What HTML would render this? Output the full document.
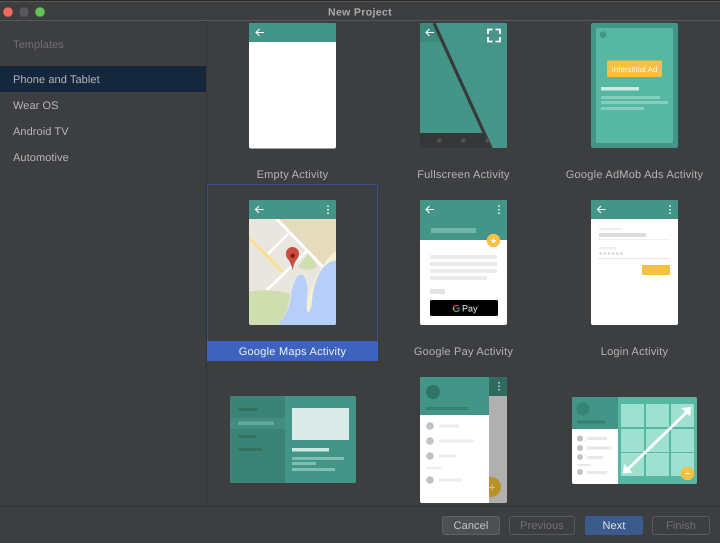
<!DOCTYPE html>
<html><head><meta charset="utf-8"><style>
html,body{margin:0;padding:0;background:#3d3e40}
svg{display:block}
text{font-family:"Liberation Sans",sans-serif;text-rendering:geometricPrecision}
.t{font-size:11px;letter-spacing:.24px;fill:#b4b5b6;text-anchor:middle}
.s{font-size:11px;letter-spacing:.08px;fill:#b6b7b8}
.b{font-size:11px;letter-spacing:.12px;text-anchor:middle}
.w{stroke:#fff;fill:none;stroke-width:1.1}
</style></head><body>
<svg width="720" height="543" viewBox="0 0 720 543" xmlns="http://www.w3.org/2000/svg">
<defs>
<clipPath id="c1"><rect x="249" y="200" width="87" height="125" rx="2"/></clipPath>
<clipPath id="c2"><rect x="420" y="23" width="87" height="125" rx="2"/></clipPath>
<clipPath id="c3"><rect x="420" y="377" width="87" height="126" rx="2"/></clipPath>
<clipPath id="c4"><rect x="572" y="397" width="125" height="87" rx="2"/></clipPath>
<clipPath id="c5"><rect x="230" y="396" width="126" height="87" rx="2"/></clipPath>
<clipPath id="c6"><rect x="420" y="200" width="87" height="125" rx="2"/></clipPath>
</defs>
<rect width="720" height="543" fill="#3d3e40"/>
<rect width="720" height="1" fill="#2a2a2b"/>
<rect y="1" width="720" height="1" fill="#555"/>
<rect y="20" width="720" height="1" fill="#565758"/>
<circle cx="8" cy="12" r="4.8" fill="#ee6a5f"/>
<circle cx="24" cy="12" r="4.8" fill="#59595b"/>
<circle cx="40" cy="12" r="4.8" fill="#62c554"/>
<text x="360" y="15.500" text-anchor="middle" style="font-size:10.500px;font-weight:bold;letter-spacing:.35px;fill:#a9aaab">New Project</text>

<rect x="206" y="21" width="1" height="485" fill="#333436"/>
<text x="13" y="48" style="font-size:11px;letter-spacing:.08px;fill:#707173">Templates</text>
<rect y="66" width="206" height="26" fill="#15273c"/>
<text class="s" x="13" y="83">Phone and Tablet</text>
<text class="s" x="13" y="109">Wear OS</text>
<text class="s" x="13" y="135">Android TV</text>
<text class="s" x="13" y="161">Automotive</text>

<!-- Empty -->
<rect x="249" y="23" width="87" height="125.500" rx="2" fill="#fff"/>
<path d="M249 42V25a2 2 0 0 1 2-2h83a2 2 0 0 1 2 2v17z" fill="#429587"/>
<path class="w" d="M264 32.500h-8M259.500 29l-3.500 3.500 3.500 3.500"/>
<text class="t" x="292.500" y="178">Empty Activity</text>

<!-- Fullscreen -->
<g clip-path="url(#c2)">
<rect x="420" y="23" width="87" height="125" fill="#429587"/>
<rect x="420" y="23" width="22" height="19" fill="#3d8a7d"/>
<rect x="420" y="133" width="87" height="15" fill="#353637"/>
<polygon points="434,23 507,23 507,148 492,148" fill="#45958a"/>
<path d="M434 23 L491 148" stroke="#38393a" stroke-width="3.200" fill="none"/>
<circle cx="439.500" cy="140.500" r="2.300" fill="#505152"/>
<circle cx="463.500" cy="140.500" r="2.300" fill="#505152"/>
<circle cx="487.500" cy="140.500" r="2.300" fill="#505152"/>
</g>
<path class="w" d="M434 32.500h-8M429.500 29l-3.500 3.500 3.500 3.500"/>
<path d="M488 34v-4.500h4.500M495.500 29.500h4.500V34M500 37v4.500H495.500M492.500 41.500H488V37" stroke="#fff" stroke-width="1.800" fill="none"/>
<text class="t" x="463.500" y="178">Fullscreen Activity</text>

<!-- AdMob -->
<rect x="591" y="23" width="87" height="125" rx="2" fill="#429587"/>
<rect x="596" y="28" width="77" height="115" rx="1" fill="#56b8a3"/>
<circle cx="603" cy="34.500" r="3.300" fill="#429587"/>
<rect x="607" y="60.500" width="55" height="16.500" rx="1" fill="#f6c042"/>
<text x="634.500" y="72" text-anchor="middle" style="font-size:8px;fill:#fff6df">Interstitial Ad</text>
<rect x="601" y="87" width="38" height="3.500" fill="#cfe9e3"/>
<rect x="601" y="96" width="59" height="3" fill="#85cdbc"/>
<rect x="601" y="101" width="67" height="3" fill="#85cdbc"/>
<rect x="601" y="107" width="43" height="3" fill="#85cdbc"/>
<text class="t" x="634.500" y="178">Google AdMob Ads Activity</text>

<!-- Maps selection -->
<rect x="207.500" y="184.500" width="170" height="157" fill="none" stroke="#37528f"/>
<rect x="207" y="341" width="171" height="20" fill="#3d63bf"/>
<text x="292.500" y="355" text-anchor="middle" style="font-size:11px;letter-spacing:.24px;fill:#eef1f8">Google Maps Activity</text>
<g clip-path="url(#c1)">
<rect x="249" y="200" width="87" height="125" fill="#e8e6df"/>
<polygon points="277,219 336,219 336,251 322.500,266" fill="#e6dcbd"/>
<path d="M249 238L283 272.500" stroke="#fbe07c" stroke-width="2.600"/>
<path d="M275 217L323 267" stroke="#fff" stroke-width="2.800"/>
<path d="M268 254L288 234" stroke="#fff" stroke-width="2.500"/>
<path d="M267 290L306.500 251.500" stroke="#fff" stroke-width="2.800"/>
<path d="M298 267L307.500 254Q313 258 317 266Q310 273 298 267z" fill="#cfdeae"/>
<path d="M249 291.500Q272 288 290 294Q288 315 278 325L249 325z" fill="#cfdeae"/>
<path d="M336 260Q326 262 320 272Q313 285 312 300Q311 312 308 312Q306 312 307 300Q308 285 305 278Q302 272 298 276Q293 282 291 295Q290 312 278 325L336 325z" fill="#b6cffa"/>
<path d="M336 251Q328 256 323 266Q316 276 311 288Q307 298 307 306Q307 312 308 312Q311 312 312 300Q313 285 320 272Q326 262 336 260z" fill="#f7f2cd"/>
</g>
<path d="M249 219V202a2 2 0 0 1 2-2h83a2 2 0 0 1 2 2v17z" fill="#429587"/>
<path class="w" d="M263.500 209.500h-8M259 206l-3.500 3.500 3.500 3.500"/>
<path d="M328 205.500v1.400M328 209v1.400M328 212.500v1.400" stroke="#fff" stroke-width="1.600"/>
<path d="M292.500 270Q291 262 287 258Q286 255.500 286 253.500A6.500 6.500 0 0 1 299 253.500Q299 255.500 298 258Q294 262 292.500 270z" fill="#cb4b3c"/>
<circle cx="292.700" cy="255.800" r="2.200" fill="#7c2018"/>

<!-- Pay -->
<g clip-path="url(#c6)">
<rect x="420" y="200" width="87" height="125" fill="#fff"/>
<rect x="420" y="200" width="87" height="40" fill="#429587"/>
</g>
<path class="w" d="M434 209.500h-8M429.500 206l-3.500 3.500 3.500 3.500"/>
<path d="M499 205.500v1.400M499 209v1.400M499 212.500v1.400" stroke="#fff" stroke-width="1.600"/>
<rect x="431" y="228" width="45" height="5" fill="#74b5aa"/>
<circle cx="493.500" cy="240.500" r="6.800" fill="#f6c042"/>
<text x="493.500" y="243.500" text-anchor="middle" style="font-size:8px;fill:#fff">★</text>
<rect x="430" y="255" width="67" height="4" fill="#ececec"/>
<rect x="430" y="262" width="67" height="4" fill="#ececec"/>
<rect x="430" y="269" width="67" height="4" fill="#ececec"/>
<rect x="430" y="276" width="57" height="4" fill="#ececec"/>
<rect x="430" y="289" width="15" height="5" fill="#e4e4e4"/>
<rect x="430" y="300" width="68" height="16" rx="1.500" fill="#000"/>
<g fill="none" stroke-width="1.200">
<path d="M458.500 306.200a3.100 3.100 0 1 0 .9 3.100" stroke="#e5493a"/>
<path d="M459.400 309.300a3.100 3.100 0 0 1-5.600.6" stroke="#34a853"/>
<path d="M453.800 309.900a3.100 3.100 0 0 1 0-2.700" stroke="#fbbc04"/>
<path d="M456.600 308.200h3.200" stroke="#4285f4"/>
</g>
<text x="462" y="311.500" style="font-size:9px;fill:#f2f2f2">Pay</text>
<text class="t" x="463.500" y="355">Google Pay Activity</text>

<!-- Login -->
<rect x="591" y="200" width="87" height="125" rx="2" fill="#fff"/>
<path d="M591 219V202a2 2 0 0 1 2-2h83a2 2 0 0 1 2 2v17z" fill="#429587"/>
<path class="w" d="M605.500 209.500h-8M601 206l-3.500 3.500 3.500 3.500"/>
<path d="M670 205.500v1.400M670 209v1.400M670 212.500v1.400" stroke="#fff" stroke-width="1.600"/>
<rect x="599" y="228" width="23" height="2" fill="#eee"/>
<rect x="599" y="233" width="47" height="4" fill="#dcdcdc"/>
<rect x="598" y="239" width="72" height="1" fill="#efefef"/>
<rect x="599" y="247" width="17" height="2" fill="#eee"/>
<g fill="#d4d4d4"><circle cx="600.500" cy="253.500" r="1.300"/><circle cx="604.700" cy="253.500" r="1.300"/><circle cx="608.900" cy="253.500" r="1.300"/><circle cx="613.100" cy="253.500" r="1.300"/><circle cx="617.300" cy="253.500" r="1.300"/><circle cx="621.500" cy="253.500" r="1.300"/></g>
<rect x="598" y="258" width="72" height="1" fill="#e6e6e6"/>
<rect x="642" y="265" width="28" height="10" fill="#f6c042"/>
<text class="t" x="634.500" y="355">Login Activity</text>

<!-- Master-detail -->
<g clip-path="url(#c5)">
<rect x="230" y="396" width="126" height="87" fill="#429587"/>
<rect x="230" y="396" width="55" height="87" fill="#3b8375"/>
<rect x="230" y="418" width="55" height="11" fill="#428d7f"/>
<rect x="238" y="408" width="20" height="3" fill="#33715f"/>
<rect x="238" y="421.500" width="36" height="3.500" fill="#5dab9d"/>
<rect x="238" y="435" width="18" height="3" fill="#33715f"/>
<rect x="238" y="448" width="24" height="3" fill="#33715f"/>
<rect x="292" y="408" width="57" height="32" fill="#d9eae8"/>
<rect x="292" y="448" width="37" height="3.500" fill="#cfe6e1"/>
<rect x="292" y="457" width="52" height="3" fill="#7fbfb3"/>
<rect x="292" y="462" width="24" height="3" fill="#7fbfb3"/>
<rect x="292" y="468" width="43" height="3" fill="#7fbfb3"/>
</g>

<!-- Nav drawer -->
<g clip-path="url(#c3)">
<rect x="420" y="377" width="87" height="126" fill="#b0b0b0"/>
<rect x="489" y="377" width="18" height="19" fill="#2f6a5f"/>
<circle cx="491" cy="487" r="10" fill="#b89229"/>
<rect x="420" y="377" width="69" height="38" fill="#429587"/>
<rect x="420" y="415" width="69" height="88" fill="#fff"/>
<circle cx="433" cy="392" r="7" fill="#2f7468"/>
<rect x="426" y="407" width="42" height="3" fill="#38806f"/>
<g fill="#c2c2c2"><circle cx="430" cy="426" r="3.800"/><circle cx="430" cy="441" r="3.800"/><circle cx="430" cy="456" r="3.800"/><circle cx="430" cy="480" r="3.800"/></g>
<g fill="#ececec"><rect x="439" y="424.500" width="20" height="3"/><rect x="439" y="439.500" width="35" height="3"/><rect x="439" y="454.500" width="17" height="3"/><rect x="427" y="467" width="14" height="2"/><rect x="439" y="478.500" width="23" height="3"/></g>
</g>
<path d="M499 382v1.400M499 385.500v1.400M499 389v1.400" stroke="#cfdeda" stroke-width="1.600"/>
<path d="M489 487.500h6M492 484.500v6" stroke="#d9c27f" stroke-width="1"/>

<!-- Grid -->
<g clip-path="url(#c4)">
<rect x="572" y="397" width="125" height="87" fill="#56b8a3"/>
<rect x="572" y="397" width="46" height="32" fill="#429587"/>
<rect x="572" y="429" width="46" height="55" fill="#fff"/>
<circle cx="583" cy="409" r="6.500" fill="#378476"/>
<rect x="577" y="420.500" width="28" height="3" fill="#37806f"/>
<g fill="#c2c2c2"><circle cx="580" cy="438.500" r="3"/><circle cx="580" cy="448" r="3"/><circle cx="580" cy="457" r="3"/><circle cx="580" cy="472" r="3"/></g>
<g fill="#e8e8e8"><rect x="587" y="437" width="20" height="3"/><rect x="587" y="446.500" width="25" height="3"/><rect x="587" y="456" width="16" height="3"/><rect x="577" y="464" width="14" height="2"/><rect x="587" y="471" width="20" height="3"/></g>
<g fill="#9fe0d0">
<rect x="621" y="404" width="23" height="23"/><rect x="646" y="404" width="23" height="23"/><rect x="671" y="404" width="23" height="23"/>
<rect x="621" y="429" width="23" height="23"/><rect x="646" y="429" width="23" height="23"/><rect x="671" y="429" width="23" height="23"/>
<rect x="621" y="453" width="23" height="23"/><rect x="646" y="453" width="23" height="23"/><rect x="671" y="453" width="23" height="23"/>
</g>
</g>
<path d="M627 470L687 412" stroke="#fff" stroke-width="2.900"/>
<polygon points="623,473.500 632.500,472.500 624,464" fill="#fff"/>
<polygon points="691,407 681.500,408 690,416.500" fill="#fff"/>
<circle cx="687.500" cy="473.500" r="6.800" fill="#f6c042"/>
<path d="M685.500 473.500h4" stroke="#fff" stroke-width="1"/>

<!-- Footer -->
<rect x="0" y="506" width="720" height="1" fill="#323335"/>
<rect x="442.500" y="516.500" width="57" height="18" rx="2.500" fill="#4d5052" stroke="#5e6163"/>
<text class="b" x="471" y="529" style="fill:#c4c5c6">Cancel</text>
<rect x="509.500" y="516.500" width="65" height="18" rx="2.500" fill="none" stroke="#58595b"/>
<text class="b" x="542" y="529" style="fill:#707173">Previous</text>
<rect x="585" y="516" width="58" height="19" rx="2.500" fill="#3b5b8c"/>
<text class="b" x="614" y="529" style="fill:#dfe3ea">Next</text>
<rect x="652.500" y="516.500" width="57" height="18" rx="2.500" fill="none" stroke="#58595b"/>
<text class="b" x="681" y="529" style="fill:#707173">Finish</text>
</svg>
</body></html>
